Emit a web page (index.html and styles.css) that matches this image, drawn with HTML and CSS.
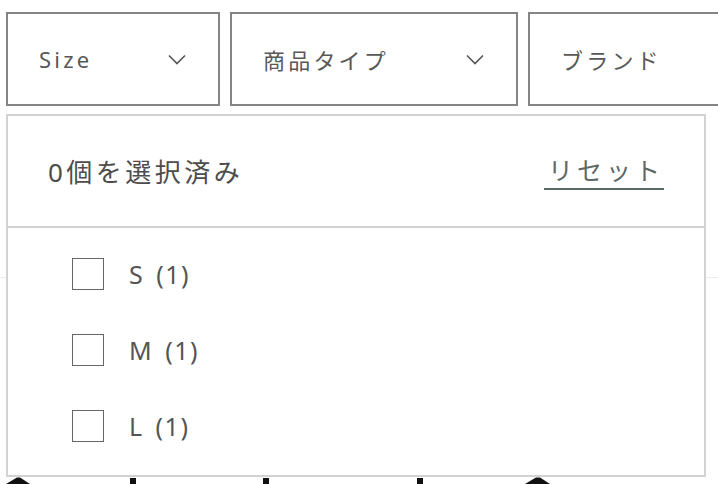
FILE: index.html
```html
<!DOCTYPE html>
<html lang="ja">
<head>
<meta charset="utf-8">
<title>Filter</title>
<link rel="stylesheet" href="styles.css">
</head>
<body>
<div class="page">
  <div class="filter-bar">
    <div class="filter filter-size">
      <span class="filter-label">Size</span>
      <svg class="chev" width="18" height="11" viewBox="0 0 18 11"><path d="M1 1.5 L9 9.5 L17 1.5" fill="none" stroke="#555" stroke-width="1.6"/></svg>
    </div>
    <div class="filter filter-type">
      <span class="filter-label">商品タイプ</span>
      <svg class="chev" width="18" height="11" viewBox="0 0 18 11"><path d="M1 1.5 L9 9.5 L17 1.5" fill="none" stroke="#555" stroke-width="1.6"/></svg>
    </div>
    <div class="filter filter-brand">
      <span class="filter-label">ブランド</span>
    </div>
  </div>
  <div class="content">
    <div class="rule"></div>
    <svg class="peek" width="718" height="7" viewBox="0 0 718 7">
      <path d="M6 7 L17 0.5 L20 0.5 L30 7 Z" fill="#111"/>
      <rect x="130" y="1" width="6" height="6" fill="#111"/>
      <rect x="263" y="1" width="6" height="6" fill="#111"/>
      <rect x="417" y="1" width="6" height="6" fill="#111"/>
      <path d="M525 7 L536 0.5 L540 0.5 L550 7 Z" fill="#111"/>
    </svg>
  </div>
  <div class="dropdown">
    <div class="dd-head">
      <span class="dd-count">0個を選択済み</span>
      <span class="dd-reset">リセット</span>
    </div>
    <ul class="dd-list">
      <li class="dd-item"><span class="box"></span><span class="dd-label">S (1)</span></li>
      <li class="dd-item"><span class="box"></span><span class="dd-label">M (1)</span></li>
      <li class="dd-item"><span class="box"></span><span class="dd-label">L (1)</span></li>
    </ul>
  </div>
</div>
</body>
</html>
```
FILE: styles.css
```css
html, body {
  margin: 0;
  padding: 0;
  overflow: hidden;
  background: #fff;
}
.page {
  position: relative;
  width: 718px;
  height: 484px;
  overflow: hidden;
  font-family: "Noto Sans", "Noto Sans CJK JP", sans-serif;
  color: #555;
}
.filter-bar {
  display: flex;
  gap: 10px;
  padding: 12px 0 0 6px;
}
.filter {
  box-sizing: border-box;
  height: 94px;
  border: 2px solid #848484;
  display: flex;
  align-items: center;
  justify-content: space-between;
  padding: 0 32px 0 31px;
  flex: none;
}
.filter-size { width: 214px; }
.filter-type { width: 288px; }
.filter-brand { width: 288px; }
.filter-label {
  font-size: 22px;
  letter-spacing: 3.2px;
  color: #585858;
}
.chev { display: block; }
.content {
  padding-top: 171px;
}
.rule {
  height: 1px;
  background: #ececec;
}
.peek {
  display: block;
  margin-top: 199px;
}
.dropdown {
  position: absolute;
  left: 6px;
  top: 114px;
  width: 700px;
  height: 363px;
  box-sizing: border-box;
  border: 2px solid #d2d2d2;
  background: #fff;
}
.dd-head {
  box-sizing: border-box;
  height: 112px;
  border-bottom: 2px solid #d2d2d2;
  display: flex;
  align-items: center;
  justify-content: space-between;
  padding: 0 40px 0 40px;
}
.dd-count {
  font-size: 26px;
  letter-spacing: 3.5px;
  color: #4d4d4d;
}
.dd-reset {
  font-size: 25px;
  letter-spacing: 4px;
  color: #5c6967;
  padding: 0 0 1px 4px;
  border-bottom: 2px solid #5c6967;
  line-height: 34px;
}
.dd-list {
  list-style: none;
  margin: 0;
  padding: 30px 0 0 64px;
  display: flex;
  flex-direction: column;
  gap: 44px;
}
.dd-item {
  display: flex;
  align-items: center;
  height: 32px;
}
.box {
  box-sizing: border-box;
  width: 32px;
  height: 32px;
  border: 1px solid #666;
  flex: none;
}
.dd-label {
  margin-left: 25px;
  font-size: 25px;
  letter-spacing: 1.5px;
  word-spacing: 4px;
  color: #555;
}
```
